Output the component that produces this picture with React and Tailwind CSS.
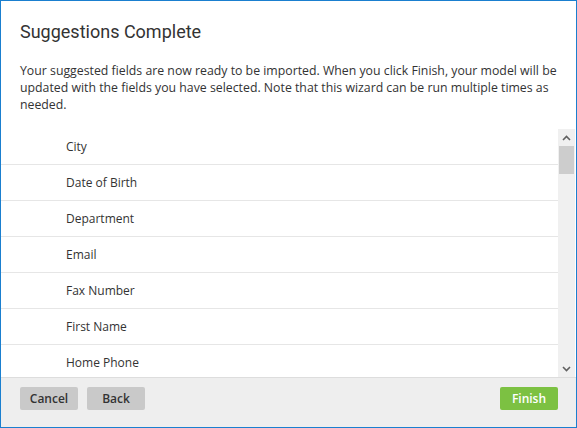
import React from "react";

const fields = ["City", "Date of Birth", "Department", "Email", "Fax Number", "First Name", "Home Phone", "Last Name"];

export default function App() {
  return (
    <div className="w-[577px] h-[428px] border border-[#1a7fcf] bg-white flex flex-col overflow-hidden" style={{ fontFamily: "'Open Sans', sans-serif" }}>
      <div className="px-[19px] pt-[20px] shrink-0">
        <h1 className="text-[18px] leading-[22px] text-[#333]" style={{ fontFamily: "Roboto, sans-serif" }}>Suggestions Complete</h1>
        <p className="mt-[19px] text-[12.3px] leading-[17px] text-[#333]">
          Your suggested fields are now ready to be imported. When you click Finish, your model will be updated with the fields you have selected. Note that this wizard can be run multiple times as needed.
        </p>
      </div>
      <div className="mt-[16px] h-[248px] flex shrink-0">
        <div className="flex-1 overflow-hidden">
          {fields.map((f) => (
            <div key={f} className="h-[36px] border-b border-[#e6e6e6] pl-[65px] flex items-center text-[12px] text-[#333]">
              {f}
            </div>
          ))}
        </div>
        <div className="w-[17px] bg-[#f0f0f0] flex flex-col items-center mr-[1px]">
          <div className="h-[17px] flex items-center justify-center">
            <svg width="9" height="6" viewBox="0 0 9 6"><path d="M1 5 L4.5 1.5 L8 5" fill="none" stroke="#606060" strokeWidth="1.6" /></svg>
          </div>
          <div className="w-[15px] h-[28px] bg-[#cdcdcd]" />
          <div className="flex-1" />
          <div className="h-[17px] flex items-center justify-center">
            <svg width="9" height="6" viewBox="0 0 9 6"><path d="M1 1 L4.5 4.5 L8 1" fill="none" stroke="#606060" strokeWidth="1.6" /></svg>
          </div>
        </div>
      </div>
      <div className="flex-1 bg-[#eeeeee] border-t border-[#dddddd] flex items-start justify-between pl-[19px] pr-[18px] pt-[9px]">
        <div className="flex gap-[9px]">
          <button className="w-[58px] h-[23px] bg-[#c9c9c9] text-[#333] text-[12px] font-semibold rounded-[2px]">Cancel</button>
          <button className="w-[58px] h-[23px] bg-[#c9c9c9] text-[#333] text-[12px] font-semibold rounded-[2px]">Back</button>
        </div>
        <button className="w-[58px] h-[23px] bg-[#7cc142] text-white text-[12px] font-semibold rounded-[2px]">Finish</button>
      </div>
    </div>
  );
}
